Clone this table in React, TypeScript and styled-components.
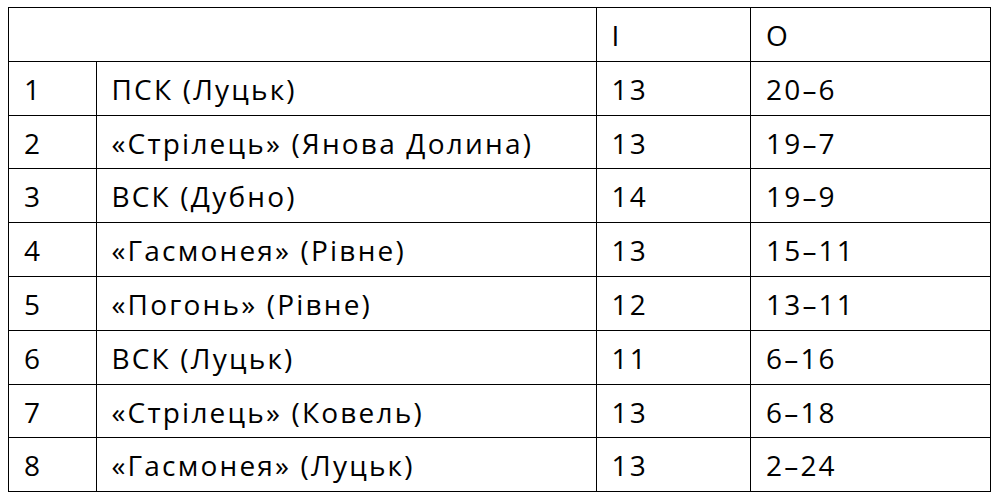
import React from "react";
import styled, { createGlobalStyle } from "styled-components";

const Global = createGlobalStyle`
  html, body { margin: 0; padding: 0; background: #ffffff; }
  body { font-family: "Open Sans", "Noto Sans", sans-serif; color: #000; }
`;

const Page = styled.div`
  padding: 7px 0 0 8px;
`;

const Table = styled.table`
  border-collapse: collapse;
  table-layout: fixed;
  width: 982px;
`;

const Row = styled.tr`
  height: 53.8px;
`;

const Cell = styled.td`
  border: 1.5px solid #000;
  padding: 11px 0 0 15px;
  vertical-align: top;
  white-space: nowrap;
  overflow: visible;
  font-family: "Open Sans", "Noto Sans", sans-serif;
  font-size: 28px;
  line-height: 32px;
  letter-spacing: 2.2px;
  color: #000;
`;

const cols = [87.5, 500, 154.5, 240];

const rows: [string, string, string, string][] = [
  ["1", "ПСК (Луцьк)", "13", "20–6"],
  ["2", "«Стрілець» (Янова Долина)", "13", "19–7"],
  ["3", "ВСК (Дубно)", "14", "19–9"],
  ["4", "«Гасмонея» (Рівне)", "13", "15–11"],
  ["5", "«Погонь» (Рівне)", "12", "13–11"],
  ["6", "ВСК (Луцьк)", "11", "6–16"],
  ["7", "«Стрілець» (Ковель)", "13", "6–18"],
  ["8", "«Гасмонея» (Луцьк)", "13", "2–24"],
];

export default function App() {
  return (
    <>
      <Global />
      <Page>
        <Table>
          <colgroup>
            {cols.map((w, i) => (
              <col key={i} style={{ width: w }} />
            ))}
          </colgroup>
          <tbody>
            <Row>
              <Cell colSpan={2} />
              <Cell>I</Cell>
              <Cell>O</Cell>
            </Row>
            {rows.map((r, i) => (
              <Row key={i}>
                {r.map((t, j) => (
                  <Cell key={j}>{t}</Cell>
                ))}
              </Row>
            ))}
          </tbody>
        </Table>
      </Page>
    </>
  );
}
